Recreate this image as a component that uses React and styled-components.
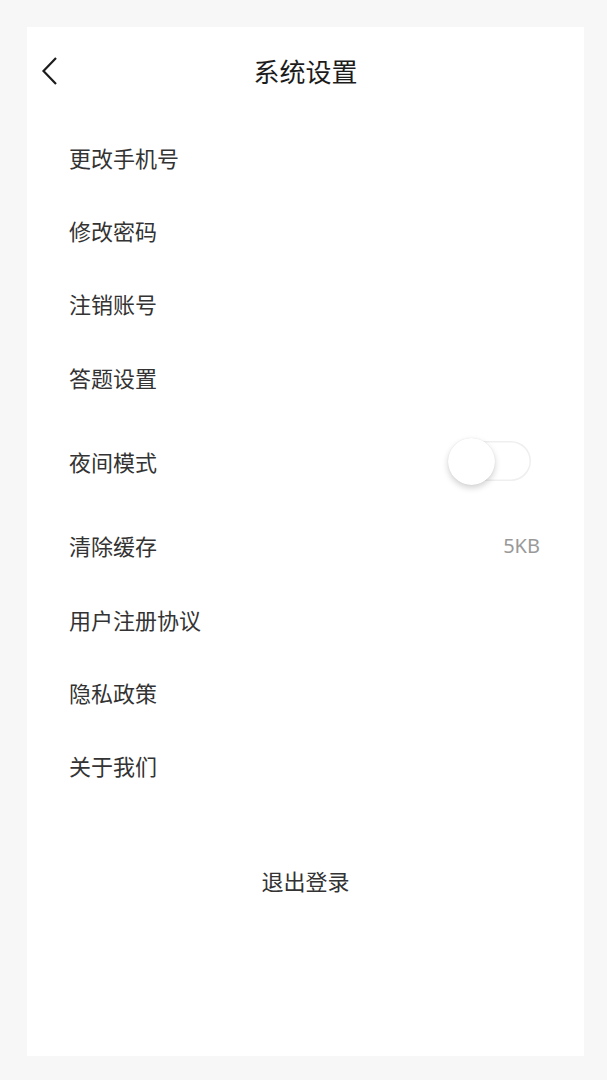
import React, { useState } from 'react';
import styled, { createGlobalStyle } from 'styled-components';

const GlobalStyle = createGlobalStyle`
    html, body {
        margin: 0;
        padding: 0;
        background: #f7f7f7;
    }
    body {
        font-family: "Noto Sans CJK SC", "Noto Sans", sans-serif;
    }
`;

const Page = styled.div`
    width: 607px;
    height: 1080px;
    padding: 27px 23px 24px 27px;
    box-sizing: border-box;
    background: #f7f7f7;
`;

const Card = styled.div`
    height: 100%;
    background: #fff;
    display: flex;
    flex-direction: column;
`;

const Header = styled.header`
    height: 88px;
    display: flex;
    align-items: center;
    justify-content: center;
    position: relative;
`;

const BackButton = styled.button`
    position: absolute;
    left: 10px;
    top: 27px;
    width: 24px;
    height: 34px;
    padding: 0;
    border: none;
    background: none;
    display: flex;
    align-items: center;
    justify-content: center;
    cursor: pointer;
`;

const Title = styled.h1`
    margin: 0;
    font-size: 26px;
    font-weight: 400;
    color: #1c1c1c;
    line-height: 1;
`;

const List = styled.ul`
    list-style: none;
    margin: 5px 0 0;
    padding: 0 44px 0 42px;
`;

const Row = styled.li`
    height: ${p => (p.$tall ? '95px' : '73.4px')};
    display: flex;
    align-items: center;
    justify-content: space-between;
    font-size: 22px;
    color: #333;
    cursor: pointer;
`;

const Value = styled.span`
    font-family: "Noto Sans", sans-serif;
    font-size: 20px;
    color: #999;
`;

const Track = styled.div`
    width: 80px;
    height: 40px;
    margin-right: 9px;
    border-radius: 20px;
    background: ${p => (p.$on ? '#4cd964' : '#fff')};
    box-shadow: inset 0 0 0 1.5px #efefef;
    position: relative;
    display: flex;
    align-items: center;
`;

const Thumb = styled.div`
    width: 47px;
    height: 47px;
    border-radius: 50%;
    background: #fff;
    box-shadow: 0 3px 6px rgba(0, 0, 0, 0.18), 0 0 1px rgba(0, 0, 0, 0.12);
    position: absolute;
    left: ${p => (p.$on ? '36px' : '-3px')};
    transition: left 0.2s;
`;

const Logout = styled.button`
    align-self: center;
    margin-top: 62px;
    border: none;
    background: none;
    padding: 0;
    font-family: inherit;
    font-size: 22px;
    color: #333;
    cursor: pointer;
`;

const items = ['更改手机号', '修改密码', '注销账号', '答题设置'];
const items2 = ['用户注册协议', '隐私政策', '关于我们'];

const App = () => {
    const [night, setNight] = useState(false);

    return (
        <Page>
            <GlobalStyle />
            <Card>
                <Header>
                    <BackButton aria-label="返回">
                        <svg width="17" height="30" viewBox="0 0 17 30">
                            <path d="M15 2 L2.5 15 L15 28" fill="none" stroke="#1c1c1c" strokeWidth="2.2" />
                        </svg>
                    </BackButton>
                    <Title>系统设置</Title>
                </Header>
                <List>
                    {items.map(t => <Row key={t}>{t}</Row>)}
                    <Row $tall onClick={() => setNight(!night)}>
                        夜间模式
                        <Track $on={night}>
                            <Thumb $on={night} />
                        </Track>
                    </Row>
                    <Row>
                        清除缓存
                        <Value>5KB</Value>
                    </Row>
                    {items2.map(t => <Row key={t}>{t}</Row>)}
                </List>
                <Logout>退出登录</Logout>
            </Card>
        </Page>
    );
};

export default App;
